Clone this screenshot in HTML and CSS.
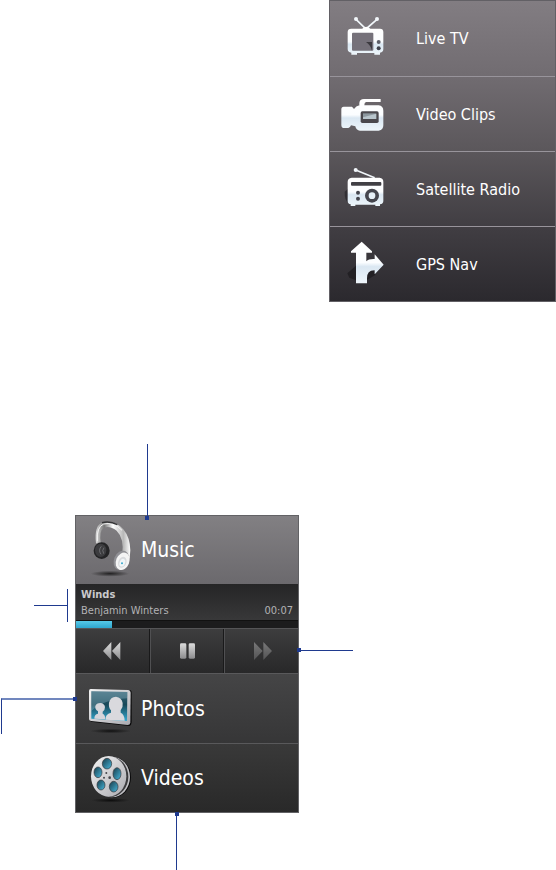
FILE: index.html
```html
<!DOCTYPE html>
<html lang="en">
<head>
  <meta charset="utf-8">
  <title>Media menus</title>
  <link rel="stylesheet" href="styles.css">
</head>
<body>
  <svg class="defs" aria-hidden="true">
    <defs>
      <linearGradient id="ice" x1="0" y1="0" x2="0" y2="1">
        <stop offset="0" stop-color="#fff"/><stop offset=".5" stop-color="#fbfdff"/>
        <stop offset=".6" stop-color="#dae7f2"/><stop offset="1" stop-color="#eef6fb"/>
      </linearGradient>
      <linearGradient id="steel" x1="0" y1="0" x2="1" y2="1">
        <stop offset="0" stop-color="#f4f4f4"/><stop offset="1" stop-color="#aaaab0"/>
      </linearGradient>
      <linearGradient id="band" x1="0" y1="0" x2="1" y2="0">
        <stop offset="0" stop-color="#ddd"/><stop offset=".25" stop-color="#777"/>
        <stop offset=".5" stop-color="#fff"/><stop offset=".8" stop-color="#b8b8b8"/><stop offset="1" stop-color="#fff"/>
      </linearGradient>
      <linearGradient id="sky" x1="0" y1="0" x2="0" y2="1">
        <stop offset="0" stop-color="#3a6677"/><stop offset=".45" stop-color="#174858"/><stop offset="1" stop-color="#35a9d0"/>
      </linearGradient>
      <linearGradient id="hole" x1="0" y1="0" x2="1" y2="1">
        <stop offset="0" stop-color="#173b49"/><stop offset="1" stop-color="#48b7dc"/>
      </linearGradient>
      <linearGradient id="key" x1="0" y1="0" x2="0" y2="1">
        <stop offset="0" stop-color="#dcdcdc"/><stop offset="1" stop-color="#8c8c8e"/>
      </linearGradient>
      <radialGradient id="shade">
        <stop offset="0" stop-color="#000" stop-opacity=".7"/><stop offset="1" stop-color="#000" stop-opacity="0"/>
      </radialGradient>
    </defs>
  </svg>

  <main class="page">
    <nav class="menu" aria-label="Services">
      <a class="menu-item" href="#tv">
        <svg class="menu-icon" viewBox="42 42 144 144" aria-hidden="true">
          <path d="M90 55L120 84L153 55" fill="none" stroke="#f2f7fb" stroke-width="5"/>
          <circle cx="90" cy="54" r="6" fill="#f2f7fb"/><circle cx="153" cy="54" r="6" fill="#f2f7fb"/>
          <path d="M106 86Q120 68 136 86Z" fill="#fff"/>
          <path d="M76 83H162Q172 83 172 93V144Q172 154 162 155V161H145V156H93V161H76V155Q65 154 65 144V93Q65 83 76 83Z" fill="url(#ice)"/>
          <rect x="78" y="95" width="64" height="54" rx="3" fill="#75717a"/>
          <path d="M120 123H138V149Q134 132 120 123Z" fill="#3c3a40"/>
          <circle cx="158" cy="123" r="6" fill="#5c5f69"/><circle cx="158" cy="142" r="6" fill="#3f424c"/>
        </svg>
        <span>Live TV</span>
      </a>
      <a class="menu-item" href="#clips">
        <svg class="menu-icon" viewBox="42 270 144 144" aria-hidden="true">
          <path d="M100 322V309Q101 297 114 297H164V306H120Q115 307 115 316H158Q172 318 172 332V376Q172 391 158 392H102Q90 391 88 379L75 376Q72 384 67 384H51Q46 383 46 376V328Q46 320 53 320H78L84 327Q90 318 100 316Z" fill="url(#ice)"/>
          <rect x="104" y="334" width="54" height="35" rx="5" fill="#4a484d"/>
          <rect x="111" y="341" width="40" height="16" fill="#b8c5cc"/>
          <path d="M111 341H151L111 352Z" fill="#8d989f"/>
        </svg>
        <span>Video Clips</span>
      </a>
      <a class="menu-item" href="#radio">
        <svg class="menu-icon" viewBox="42 48 144 144" aria-hidden="true">
          <path d="M56 128L68 118V162Q55 154 56 128Z" fill="#222025" opacity=".6"/>
          <path d="M89 63L146 86" stroke="#f2f7fb" stroke-width="5"/>
          <circle cx="89" cy="63" r="6" fill="#f2f7fb"/>
          <path d="M77 86H161Q172 87 172 98V156Q172 165 162 166V171H148V167H88V171H74V166Q65 165 65 156V98Q65 87 77 86Z" fill="url(#ice)"/>
          <rect x="75" y="99" width="91" height="11" rx="3" fill="#403f45"/>
          <circle cx="138" cy="140" r="21" fill="#45464e"/><circle cx="138" cy="140" r="10" fill="#e6f0f7"/>
          <circle cx="96" cy="131" r="6" fill="#45464e"/><circle cx="96" cy="149" r="6" fill="#45464e"/>
        </svg>
        <span>Satellite Radio</span>
      </a>
      <a class="menu-item" href="#gps">
        <svg class="menu-icon" viewBox="42 273 144 144" aria-hidden="true">
          <path d="M90 350L64 373L70 386L90 394L124 392L148 378L145 366Z" fill="#171519" opacity=".6"/>
          <path d="M107 278L138 307V311H121V337Q128 329 146 330V316L173 347L146 376V364Q123 363 123 388V403H90V311H75V307Z" fill="url(#ice)"/>
        </svg>
        <span>GPS Nav</span>
      </a>
    </nav>

    <section class="player" aria-label="Media player">
      <a class="entry entry-music" href="#music">
        <svg class="entry-icon" viewBox="48 27 144 180" aria-hidden="true">
          <ellipse cx="120" cy="188" rx="58" ry="9" fill="url(#shade)"/>
          <path d="M78 97Q72 43 98 34Q134 27 160 55Q180 79 181 118Q181 140 174 158L157 130Q163 82 140 59Q118 43 101 51Q86 60 93 98Z" fill="url(#band)"/>
          <path d="M82 91Q79 48 101 39Q132 32 156 58" fill="none" stroke="#f7f7f7" stroke-width="3"/>
          <path d="M96 35Q120 29 142 41" fill="none" stroke="#343436" stroke-width="4"/>
          <ellipse cx="95" cy="119" rx="24" ry="25" fill="#242426"/>
          <ellipse cx="92" cy="118" rx="17" ry="20" fill="#3c3c3f"/>
          <path d="M94 106Q84 117 93 130M102 110Q95 118 101 128" fill="none" stroke="#858589" stroke-width="2"/>
          <ellipse cx="154" cy="148" rx="22" ry="30" transform="rotate(22 154 148)" fill="#909095"/>
          <ellipse cx="158" cy="151" rx="20" ry="27" transform="rotate(22 158 151)" fill="#f4f4f4"/>
          <ellipse cx="157" cy="154" rx="12" ry="17" transform="rotate(22 157 154)" fill="#d9dbde"/>
          <ellipse cx="157" cy="155" rx="8" ry="12" transform="rotate(22 157 155)" fill="#f0f5f7"/>
          <circle cx="156" cy="157" r="3" fill="#39a8cc"/>
        </svg>
        <span>Music</span>
      </a>

      <div class="track">
        <div class="track-title">Winds</div>
        <div class="track-line"><span>Benjamin Winters</span><time>00:07</time></div>
      </div>
      <progress class="track-bar" value="16" max="100" aria-label="Playback position"></progress>

      <div class="controls">
        <button type="button" aria-label="Previous">
          <svg viewBox="0 0 60 60" aria-hidden="true"><path d="M25 3V57L0 30ZM52 3V57L27 30Z" fill="url(#key)"/></svg>
        </button>
        <button type="button" aria-label="Pause">
          <svg viewBox="0 0 60 60" aria-hidden="true"><rect x="9" y="7" width="19" height="46" rx="4" fill="url(#key)"/><rect x="35" y="7" width="19" height="46" rx="4" fill="url(#key)"/></svg>
        </button>
        <button type="button" class="dim" aria-label="Next">
          <svg viewBox="0 0 60 60" aria-hidden="true"><path d="M6 3V57L32 30ZM34 3V57L60 30Z" fill="url(#key)"/></svg>
        </button>
      </div>

      <a class="entry entry-photos" href="#photos">
        <svg class="entry-icon" viewBox="48 24 144 180" aria-hidden="true">
          <ellipse cx="122" cy="180" rx="62" ry="7" fill="url(#shade)"/>
          <path d="M62 56L180 57Q186 58 185 66V154Q185 162 178 165L62 152Z" fill="#09090a"/>
          <path d="M62 54L175 57Q182 58 182 65L181 155Q180 162 173 162L63 150Q57 149 57 144V60Q57 54 62 54Z" fill="url(#steel)"/>
          <path d="M64 61L172 63L171 150L64 143Z" fill="url(#sky)"/>
          <path d="M64 61L172 63V82Q100 85 64 120Z" fill="#a8ced9" opacity=".3"/>
          <path d="M73 143Q73 130 84 128V121Q74 115 76 105Q79 96 91 96Q103 97 105 108Q105 118 98 122V128Q106 131 106 145Z" fill="#d5d5da"/>
          <path d="M107 146Q105 129 123 125V118Q115 111 117 95Q121 77 138 77Q155 79 158 96Q160 108 152 118V125Q163 129 164 149Z" fill="#d9d9dd"/>
        </svg>
        <span>Photos</span>
      </a>
      <a class="entry" href="#videos">
        <svg class="entry-icon" viewBox="48 234 144 180" aria-hidden="true">
          <ellipse cx="122" cy="391" rx="58" ry="7" fill="url(#shade)"/>
          <ellipse cx="129" cy="322" rx="54" ry="61" fill="#09090a"/>
          <ellipse cx="126" cy="321" rx="54" ry="61" fill="#c0c0c4"/>
          <ellipse cx="120" cy="320" rx="55" ry="61" fill="#3b3b3e"/>
          <ellipse cx="116" cy="319" rx="53" ry="61" fill="url(#steel)"/>
          <g fill="url(#hole)" stroke="#333438" stroke-width="2">
            <ellipse cx="111" cy="281" rx="14" ry="16"/>
            <ellipse cx="141" cy="311" rx="12" ry="18"/>
            <ellipse cx="131" cy="350" rx="13" ry="16"/>
            <ellipse cx="93" cy="345" rx="12" ry="15"/>
            <ellipse cx="84" cy="307" rx="12" ry="16"/>
          </g>
          <g fill="#45464b"><circle cx="109" cy="309" r="3"/><circle cx="119" cy="323" r="4"/><circle cx="102" cy="323" r="3"/></g>
        </svg>
        <span>Videos</span>
      </a>

      <!-- callout lines around the player -->
      <i class="callout callout-top"></i>
      <i class="callout callout-track"></i>
      <i class="callout callout-controls"></i>
      <i class="callout callout-photos"></i>
      <i class="callout callout-bottom"></i>
    </section>
  </main>
</body>
</html>
```
FILE: styles.css
```css
* {
  box-sizing: border-box;
}
body {
  margin: 0;
  background: #fff;
  font-family: "DejaVu Sans Condensed", "DejaVu Sans", sans-serif;
}
.defs {
  position: absolute;
  width: 0;
  height: 0;
}
.page {
  display: grid;
  grid-template-columns: 75fr 224fr 30fr 227fr;
  row-gap: 213px;
  padding-bottom: 57px;
}
a {
  color: #fff;
  text-decoration: none;
}

/* services menu */
.menu {
  grid-column: 4;
  border: 1px solid #626065;
  background: linear-gradient(#827d82, #716c71 25%, #5b575b 50%, #413e43 75%, #2b292e);
}
.menu-item {
  display: flex;
  align-items: center;
  gap: 28px;
  height: 75px;
  padding-left: 10px;
  font-size: 16px;
}
.menu-item + .menu-item {
  border-top: 1px solid #98949b;
}
.menu-icon {
  flex: none;
  width: 48px;
  height: 48px;
}

/* player */
.player {
  grid-column: 2;
  position: relative;
  border: 1px solid #626265;
  background: #2c2c2d;
}
.entry {
  display: flex;
  align-items: center;
  gap: 7px;
  height: 69px;
  padding-left: 10px;
  border-top: 1px solid #59595b;
  background: linear-gradient(#393939, #292929);
  font-size: 21px;
}
.entry-music {
  height: 68px;
  border-top: 0;
  background: linear-gradient(#828083, #6b696d);
}
.entry-photos {
  height: 70px;
  background: linear-gradient(#454546, #363637);
}
.entry-icon {
  flex: none;
  width: 48px;
  height: 60px;
}
.track {
  height: 36px;
  padding: 3px 5px;
  background: linear-gradient(#252526, #383839);
  color: #b2b2b4;
  font-size: 11px;
  line-height: 16px;
}
.track-title {
  color: #c9c9cb;
  font-weight: bold;
}
.track-line {
  display: flex;
  justify-content: space-between;
}
.track-bar {
  display: block;
  appearance: none;
  width: 100%;
  height: 8px;
  border: 0;
  border-top: 1px solid #111;
  background: #1c1c1d;
}
.track-bar::-webkit-progress-bar {
  background: #1c1c1d;
}
.track-bar::-webkit-progress-value {
  background: linear-gradient(#56c9e8, #2ea6ce);
}
.controls {
  display: grid;
  grid-template-columns: repeat(3, 1fr);
  height: 45px;
  border-top: 1px solid #555557;
}
.controls button {
  display: flex;
  align-items: center;
  justify-content: center;
  padding: 0;
  border: 0;
  border-right: 1px solid #19191a;
  background: linear-gradient(#3d3d3e, #282829);
}
.controls button + button {
  border-left: 1px solid #505052;
}
.controls button:last-child {
  border-right: 0;
}
.controls svg {
  width: 20px;
  height: 20px;
}
.dim svg {
  opacity: .4;
}

/* callouts */
.callout {
  position: absolute;
  background: #1f3a8f;
}
.callout::after {
  content: "";
  position: absolute;
  width: 4px;
  height: 4px;
  background: #1f3a8f;
}
.callout-top {
  left: 71px;
  bottom: 100%;
  width: 1px;
  height: 72px;
}
.callout-top::after {
  top: 100%;
  left: -2px;
}
.callout-track {
  top: 89px;
  right: 100%;
  width: 34px;
  height: 1px;
  margin-right: 8px;
}
.callout-track::after {
  top: -16px;
  right: 0;
  width: 1px;
  height: 33px;
}
.callout-controls {
  top: 134px;
  left: 100%;
  width: 55px;
  height: 1px;
}
.callout-controls::after {
  top: -2px;
  left: -1px;
}
.callout-photos {
  top: 182px;
  right: 100%;
  width: 75px;
  height: 36px;
  border-top: 2px solid #7187be;
  border-left: 1px solid #1f3a8f;
  background: none;
}
.callout-photos::after {
  top: -3px;
  right: -1px;
}
.callout-bottom {
  top: 100%;
  left: 100px;
  width: 1px;
  height: 58px;
}
.callout-bottom::after {
  top: 0;
  left: -1px;
}
```
